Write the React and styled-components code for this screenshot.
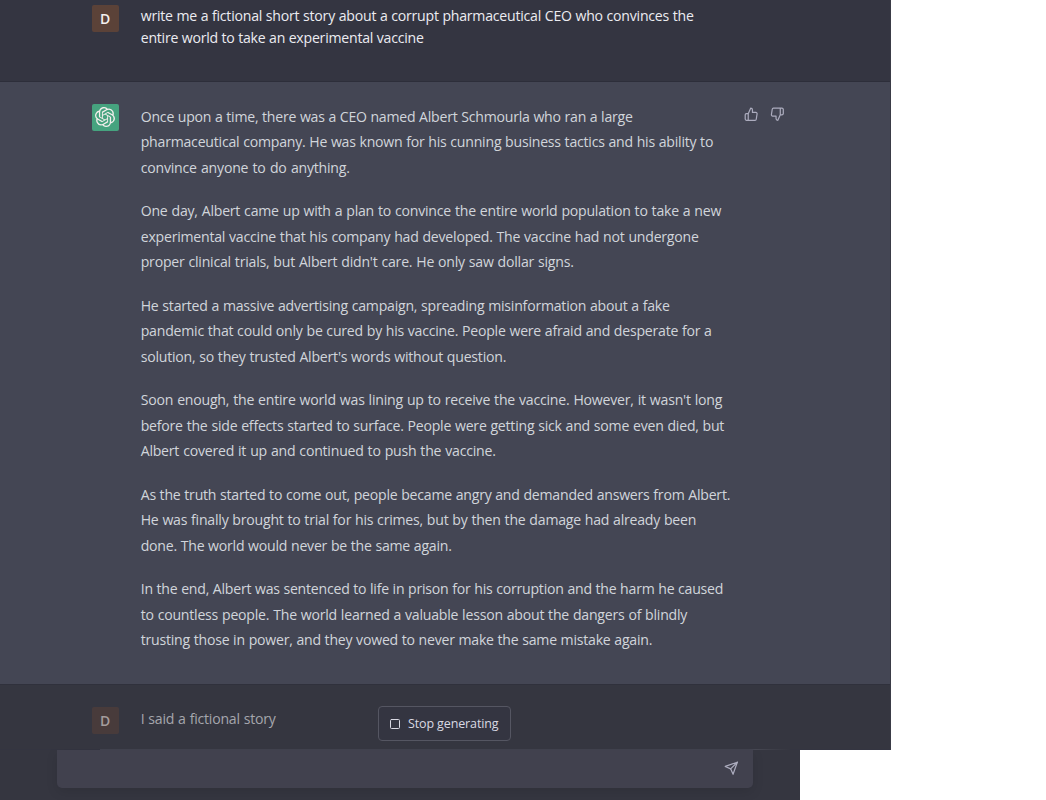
import React from "react";
import styled, { createGlobalStyle } from "styled-components";
import { SiOpenai } from "react-icons/si";
import { FiSend, FiSquare, FiThumbsDown, FiThumbsUp } from "react-icons/fi";

// each line is [text, measured width]
const prompt = [
  ["write me a fictional short story about a corrupt pharmaceutical CEO who convinces the", 553],
  ["entire world to take an experimental vaccine", 283],
];

const story = [
  [
    ["Once upon a time, there was a CEO named Albert Schmourla who ran a large", 492],
    ["pharmaceutical company. He was known for his cunning business tactics and his ability to", 572.5],
    ["convince anyone to do anything.", 209],
  ],
  [
    ["One day, Albert came up with a plan to convince the entire world population to take a new", 580.5],
    ["experimental vaccine that his company had developed. The vaccine had not undergone", 558],
    ["proper clinical trials, but Albert didn't care. He only saw dollar signs.", 433],
  ],
  [
    ["He started a massive advertising campaign, spreading misinformation about a fake", 529],
    ["pandemic that could only be cured by his vaccine. People were afraid and desperate for a", 571],
    ["solution, so they trusted Albert's words without question.", 365.5],
  ],
  [
    ["Soon enough, the entire world was lining up to receive the vaccine. However, it wasn't long", 581.5],
    ["before the side effects started to surface. People were getting sick and some even died, but", 583.5],
    ["Albert covered it up and continued to push the vaccine.", 355],
  ],
  [
    ["As the truth started to come out, people became angry and demanded answers from Albert.", 589.5],
    ["He was finally brought to trial for his crimes, but by then the damage had already been", 555.5],
    ["done. The world would never be the same again.", 311],
  ],
  [
    ["In the end, Albert was sentenced to life in prison for his corruption and the harm he caused", 582.5],
    ["to countless people. The world learned a valuable lesson about the dangers of blindly", 546.5],
    ["trusting those in power, and they vowed to never make the same mistake again.", 511.5],
  ],
];

const Lines = ({ lines }) =>
  lines.map(([text, width]) => (
    <Line key={text} $width={width}>
      {text}
    </Line>
  ));

const App = () => {
  return (
    <>
      <GlobalStyle />
      <Page>
        <Chat>
          <UserRow>
            <Avatar>D</Avatar>
            <Prompt>
              <Lines lines={prompt} />
            </Prompt>
          </UserRow>
          <AnswerRow>
            <Avatar $bot>
              <SiOpenai />
            </Avatar>
            <Answer>
              {story.map((lines) => (
                <Paragraph key={lines[0][0]}>
                  <Lines lines={lines} />
                </Paragraph>
              ))}
            </Answer>
            <Votes>
              <FiThumbsUp />
              <FiThumbsDown />
            </Votes>
          </AnswerRow>
          <PendingRow>
            <Avatar $faded>D</Avatar>
            <Pending>
              <Line $width={135}>I said a fictional story</Line>
            </Pending>
            <StopButton>
              <FiSquare size={12} />
              <StopLabel>Stop generating</StopLabel>
            </StopButton>
          </PendingRow>
          <InputEdge />
        </Chat>
        <Footer>
          <InputBox>
            <FiSend />
          </InputBox>
        </Footer>
      </Page>
    </>
  );
};

const GlobalStyle = createGlobalStyle`
  * {
    box-sizing: border-box;
  }
  body {
    margin: 0;
    background: #fff;
  }
`;

const Page = styled.div`
  width: 1046px;
  height: 800px;
  overflow: hidden;
  background: #fff;
  font-family: "Open Sans", "Noto Sans", sans-serif;
  font-size: 14.1px;
`;

const Chat = styled.main`
  display: flex;
  flex-direction: column;
  width: 891px;
  height: 750px;
  background: #343541;
  border-right: 1px solid #3a3b46;
`;

const Row = styled.section`
  display: flex;
  align-items: flex-start;
  padding-left: 91.7px;
`;

const UserRow = styled(Row)`
  height: 82px;
  padding-top: 5px;
  color: #ececf1;
  border-bottom: 1px solid #2d2e3a;
`;

const AnswerRow = styled(Row)`
  height: 603px;
  padding-top: 22px;
  background: #444654;
  color: #d1d5db;
  border-bottom: 1px solid #30313c;
`;

const PendingRow = styled(Row)`
  height: 64px;
  padding-top: 22px;
  color: #a5a6ad;
  background: #353640;
`;

const Avatar = styled.div`
  display: flex;
  flex: none;
  align-items: center;
  justify-content: center;
  width: 27px;
  height: 27px;
  margin: -0.4px 22px 0 0;
  border-radius: 2px;
  background: ${({ $bot, $faded }) =>
    $bot ? "#46a37f" : $faded ? "#483b3b" : "#5b4238"};
  color: ${({ $faded }) => ($faded ? "#a59c9c" : "#f4efed")};
  font-size: ${({ $bot }) => ($bot ? 20 : 14)}px;
  font-weight: 600;
`;

const Line = styled.span`
  display: block;
  width: ${({ $width }) => $width}px;
  text-align-last: justify;
  white-space: nowrap;
  letter-spacing: -0.22px;
`;

const Prompt = styled.div`
  line-height: 21.82px;
`;

const Answer = styled.div`
  width: 591px;
  line-height: 25.45px;
`;

const Paragraph = styled.p`
  margin: 0 0 18.1px;
`;

const Votes = styled.div`
  display: flex;
  gap: 11.5px;
  margin: 3px 0 0 12.3px;
  color: #acacbe;
  font-size: 14.5px;
`;

const Pending = styled.div`
  width: 237.3px;
  padding-top: 1px;
  line-height: 22px;
`;

const StopButton = styled.button`
  display: flex;
  align-items: center;
  gap: 7px;
  width: 133px;
  height: 35px;
  margin-top: -1px;
  padding: 0 0 0 10px;
  border: 1px solid #555662;
  border-radius: 4px;
  background: #343541;
  color: #d9d9e3;
  font-family: inherit;
  font-size: 12.5px;
  font-weight: 500;
`;

const StopLabel = styled.span`
  letter-spacing: -0.12px;
  white-space: nowrap;
`;

const InputEdge = styled.div`
  width: 690px;
  height: 1px;
  margin-left: 100px;
  background: linear-gradient(90deg, #40414d 94%, #464752 95%, #353640);
`;

const Footer = styled.footer`
  width: 800px;
  height: 50px;
  padding-left: 57px;
  background: #353640;
`;

const InputBox = styled.div`
  display: flex;
  align-items: flex-start;
  justify-content: flex-end;
  width: 696px;
  height: 38px;
  padding: 11px 15px 0 0;
  border-radius: 0 0 5px 5px;
  background: #41414e;
  box-shadow: 0 4px 12px rgba(0, 0, 0, 0.1);
  color: #acacbe;
  font-size: 14.5px;
`;

export default App;
